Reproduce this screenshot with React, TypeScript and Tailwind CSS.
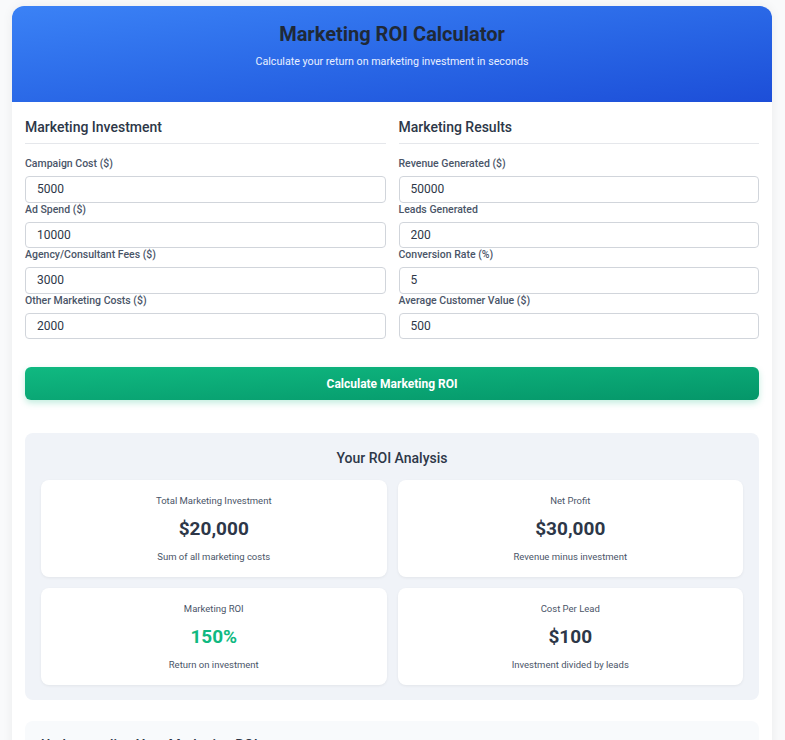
import React, { useState } from 'react';

type Field = { key: string; label: string; value: string };

const investmentFields: Field[] = [
  { key: 'campaign', label: 'Campaign Cost ($)', value: '5000' },
  { key: 'ads', label: 'Ad Spend ($)', value: '10000' },
  { key: 'agency', label: 'Agency/Consultant Fees ($)', value: '3000' },
  { key: 'other', label: 'Other Marketing Costs ($)', value: '2000' },
];

const resultFields: Field[] = [
  { key: 'revenue', label: 'Revenue Generated ($)', value: '50000' },
  { key: 'leads', label: 'Leads Generated', value: '200' },
  { key: 'conversion', label: 'Conversion Rate (%)', value: '5' },
  { key: 'customer', label: 'Average Customer Value ($)', value: '500' },
];

const FieldGroup: React.FC<{ title: string; fields: Field[]; values: Record<string, string>; onChange: (k: string, v: string) => void }> = ({ title, fields, values, onChange }) => (
  <div>
    <h2 className="text-[14px] leading-[18px] font-medium text-[#2d3748] pb-[7px] border-b border-[#e5e7eb] mb-[13px]">{title}</h2>
    {fields.map(f => (
      <div key={f.key}>
        <label className="block text-[10.5px] leading-[13px] font-medium text-[#4a5568] mb-[6px]">{f.label}</label>
        <input
          type="text"
          value={values[f.key]}
          onChange={e => onChange(f.key, e.target.value)}
          className="block w-full h-[26.5px] px-[11px] text-[12px] text-[#2d3748] border border-[#d1d5db] rounded-[4px] bg-white outline-none"
        />
      </div>
    ))}
  </div>
);

const ResultCard: React.FC<{ label: string; value: string; desc: string; green?: boolean }> = ({ label, value, desc, green }) => (
  <div className="bg-white rounded-lg shadow-[0_1px_3px_rgba(0,0,0,0.06)] h-[97px] flex flex-col items-center pt-[14px]">
    <div className="text-[9.5px] leading-[14px] text-[#4a5568]">{label}</div>
    <div className={`text-[19px] leading-[26px] font-bold mt-[8px] ${green ? 'text-[#10b981]' : 'text-[#2d3748]'}`}>{value}</div>
    <div className="text-[9.5px] leading-[14px] text-[#4a5568] mt-[8px]">{desc}</div>
  </div>
);

export default function App() {
  const [values, setValues] = useState<Record<string, string>>(
    Object.fromEntries([...investmentFields, ...resultFields].map(f => [f.key, f.value]))
  );
  const setField = (k: string, v: string) => setValues({ ...values, [k]: v });

  return (
    <div className="min-h-screen bg-[#f9fafb] pt-[6px] font-['Roboto',sans-serif]">
      <div className="ml-[12px] w-[760px] bg-white rounded-t-xl shadow-[0_0_12px_rgba(0,0,0,0.06)] overflow-hidden">
        <div className="bg-gradient-to-br from-[#3b82f6] to-[#1d4ed8] h-[96px] flex flex-col items-center pt-[15px]">
          <h1 className="text-[20px] leading-[26px] font-bold text-[#1f2937]">Marketing ROI Calculator</h1>
          <p className="text-[10.7px] leading-[16px] text-[#e8efff] mt-[7px]">Calculate your return on marketing investment in seconds</p>
        </div>

        <div className="px-[13px] pt-[16px] pb-[20px]">
          <div className="grid grid-cols-2 gap-[13px]">
            <FieldGroup title="Marketing Investment" fields={investmentFields} values={values} onChange={setField} />
            <FieldGroup title="Marketing Results" fields={resultFields} values={values} onChange={setField} />
          </div>

          <button className="mt-[28px] w-full h-[33px] rounded-md bg-gradient-to-br from-[#10b981] to-[#059669] text-white text-[12px] font-bold shadow-[0_3px_6px_rgba(16,185,129,0.25)]">
            Calculate Marketing ROI
          </button>

          <div className="mt-[33px] bg-[#f0f3f8] rounded-lg px-[16px] pt-[16px] pb-[15px]">
            <h3 className="text-center text-[14px] leading-[18px] font-medium text-[#2d3748]">Your ROI Analysis</h3>
            <div className="grid grid-cols-2 gap-[11px] mt-[13px]">
              <ResultCard label="Total Marketing Investment" value="$20,000" desc="Sum of all marketing costs" />
              <ResultCard label="Net Profit" value="$30,000" desc="Revenue minus investment" />
              <ResultCard label="Marketing ROI" value="150%" desc="Return on investment" green />
              <ResultCard label="Cost Per Lead" value="$100" desc="Investment divided by leads" />
            </div>
          </div>

          <div className="mt-[21px] bg-[#f8fafc] rounded-lg px-[16px] pt-[15px] pb-[16px]">
            <h3 className="text-[14px] leading-[18px] font-medium text-[#2d3748]">Understanding Your Marketing ROI</h3>
            <p className="text-[11px] text-[#4a5568] mt-[8px]">ROI measures the profitability of your marketing spend relative to its cost.</p>
          </div>
        </div>
      </div>
    </div>
  );
}
